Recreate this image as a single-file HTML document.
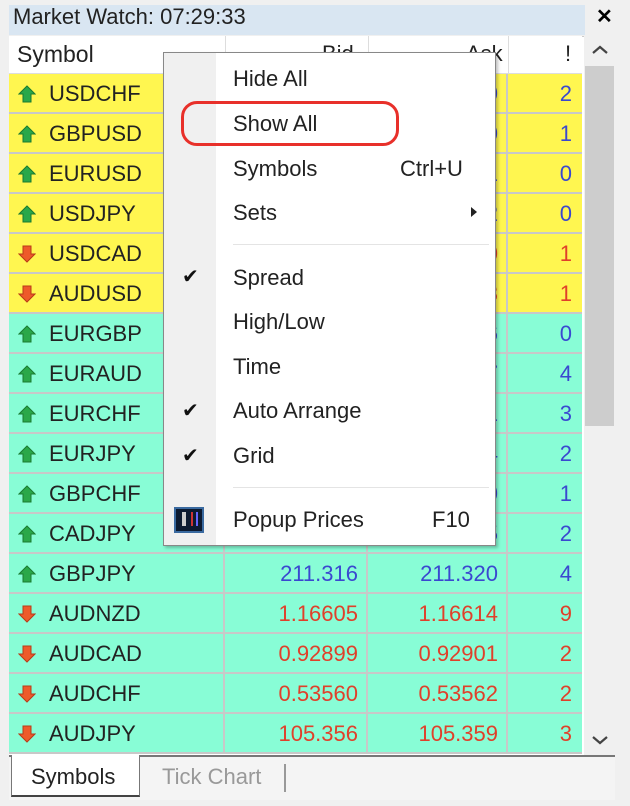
<!DOCTYPE html>
<html><head><meta charset="utf-8"><style>
*{margin:0;padding:0;box-sizing:border-box}
body{width:630px;height:806px;background:#f0f0f0;font-family:"Liberation Sans",sans-serif;position:relative;overflow:hidden}
.a{position:absolute}
.t{font-size:22px;line-height:40px;white-space:nowrap}
.row{position:absolute;left:9px;width:573px;height:40px;border-bottom:2px solid #c8c8c8}
.y{background:#fff650}.g{background:#88fdd6}
.c{position:absolute;top:0;height:38px;border-right:2px solid #c8c8c8}
.sym{left:0;width:216px;padding-left:40px;color:#222}
.bid{left:216px;width:143px;text-align:right;padding-right:8px}
.ask{left:359px;width:140px;text-align:right;padding-right:8px}
.sp{left:499px;width:74px;text-align:right;padding-right:10px;border-right:none}
.b{color:#3a48d0}.r{color:#e0402a}
.ic{position:absolute;left:9px;top:11px}
.mi{position:absolute;left:233px;font-size:22px;color:#222;line-height:30px}
.ck{position:absolute;left:182px;font-size:20px;color:#111}
</style></head><body>
<div class="a" style="left:9px;top:5px;width:576px;height:30px;background:#d9e6f2"></div>
<div class="a t" style="left:13px;top:-3px;color:#222;font-size:22px">Market Watch: 07:29:33</div>
<div class="a t" style="left:596px;top:-3px;font-size:20px;font-weight:bold">✕</div>
<div class="a" style="left:9px;top:36px;width:606px;height:720px;background:#fff;border-top:1px solid #ccc"></div>
<div class="a" style="left:9px;top:36px;width:573px;height:38px;background:#fff;border-bottom:1px solid #ddd"></div>
<div class="a t" style="left:17px;top:34px;color:#222;font-size:23px">Symbol</div>
<div class="a" style="left:225px;top:36px;width:1px;height:38px;background:#ddd"></div>
<div class="a" style="left:368px;top:36px;width:1px;height:38px;background:#ddd"></div>
<div class="a" style="left:508px;top:36px;width:1px;height:38px;background:#ddd"></div>
<div class="a t" style="left:322px;top:34px;color:#222">Bid</div>
<div class="a t" style="left:466px;top:34px;color:#222">Ask</div>
<div class="a t" style="left:565px;top:34px;color:#222">!</div>
<div class="a" style="left:584px;top:36px;width:31px;height:720px;background:#f0f0f0"></div>
<div class="a" style="left:585px;top:66px;width:29px;height:360px;background:#cdcdcd"></div>
<svg class="a" style="left:591px;top:44px" width="18" height="12"><path d="M2 9 L9 3 L16 9" stroke="#444" stroke-width="2.2" fill="none"/></svg>
<svg class="a" style="left:591px;top:734px" width="18" height="12"><path d="M2 3 L9 9 L16 3" stroke="#444" stroke-width="2.2" fill="none"/></svg>

<svg width="0" height="0" style="position:absolute"><defs>
<g id="up"><path d="M9 1 L17 9 L13 9 L13 17 L5 17 L5 9 L1 9 Z" fill="#2aa84a" stroke="#1a7a30" stroke-width="1"/></g>
<g id="dn"><path d="M9 17 L17 9 L13 9 L13 1 L5 1 L5 9 L1 9 Z" fill="#ee5a2a" stroke="#b83a18" stroke-width="1"/></g>
</defs></svg>

<div id="rows"></div>
<script>
var d=[["USDCHF","","0","2","y","u","b"],["GBPUSD","","0","1","y","u","b"],["EURUSD","","1","0","y","u","b"],["USDJPY","","2","0","y","u","b"],["USDCAD","","0","1","y","d","r"],["AUDUSD","","3","1","y","d","r"],["EURGBP","","6","0","g","u","b"],["EURAUD","","7","4","g","u","b"],["EURCHF","","1","3","g","u","b"],["EURJPY","","4","2","g","u","b"],["GBPCHF","","0","1","g","u","b"],["CADJPY","","5","2","g","u","b"],["GBPJPY","211.316","211.320","4","g","u","b"],["AUDNZD","1.16605","1.16614","9","g","d","r"],["AUDCAD","0.92899","0.92901","2","g","d","r"],["AUDCHF","0.53560","0.53562","2","g","d","r"],["AUDJPY","105.356","105.359","3","g","d","r"]];
var h="";d.forEach(function(r,i){var y=74+i*40;if(i==16)y=714;
h+='<div class="row '+r[4]+'" style="top:'+y+'px"><div class="c t sym"><svg class="ic" width="18" height="18"><use href="#'+(r[5]=="u"?"up":"dn")+'"/></svg>'+r[0]+'</div><div class="c t bid '+r[6]+'">'+r[1]+'</div><div class="c t ask '+r[6]+'">'+r[2]+'</div><div class="c t sp '+r[6]+'">'+r[3]+'</div></div>';});
document.getElementById("rows").innerHTML=h;
</script>
<div class="a" style="left:9px;top:755px;width:606px;height:45px;background:#f4f4f4;border-top:2px solid #777"></div>
<div class="a" style="left:11px;top:755px;width:129px;height:42px;background:#fff;border:1px solid #777;border-top:none;border-bottom:2px solid #444"></div>
<div class="a t" style="left:31px;top:757px;color:#222">Symbols</div>
<div class="a t" style="left:162px;top:757px;color:#999">Tick Chart</div>
<div class="a" style="left:284px;top:764px;width:2px;height:28px;background:#999"></div>

<div class="a" style="left:163px;top:52px;width:333px;height:494px;background:#fff;border:1px solid #888;box-shadow:2px 2px 3px rgba(0,0,0,.25)"></div>
<div class="a" style="left:164px;top:53px;width:52px;height:492px;background:#f0f0f0"></div>
<div class="mi" style="top:64px">Hide All</div>
<div class="mi" style="top:109px">Show All</div>
<div class="mi" style="top:154px">Symbols</div><div class="mi" style="top:154px;left:400px">Ctrl+U</div>
<div class="mi" style="top:198px">Sets</div>
<div class="a" style="left:471px;top:207px;width:0;height:0;border-left:6px solid #222;border-top:5px solid transparent;border-bottom:5px solid transparent"></div>
<div class="a" style="left:233px;top:244px;width:256px;height:1px;background:#e4e4e4"></div>
<div class="mi" style="top:263px">Spread</div>
<div class="mi" style="top:307px">High/Low</div>
<div class="mi" style="top:352px">Time</div>
<div class="mi" style="top:396px">Auto Arrange</div>
<div class="mi" style="top:441px">Grid</div>
<div class="a" style="left:233px;top:487px;width:256px;height:1px;background:#e4e4e4"></div>
<div class="mi" style="top:505px">Popup Prices</div><div class="mi" style="top:505px;left:432px">F10</div>
<div class="ck" style="top:264px">✔</div><div class="ck" style="top:398px">✔</div><div class="ck" style="top:443px">✔</div>
<div class="a" style="left:174px;top:507px;width:30px;height:26px;background:#0c1a30;border:2px solid #3a6aa0"></div>
<div class="a" style="left:182px;top:512px;width:4px;height:14px;background:#ccc"></div>
<div class="a" style="left:191px;top:512px;width:2px;height:14px;background:#c33"></div>
<div class="a" style="left:196px;top:512px;width:2px;height:14px;background:#66f"></div>
<div class="a" style="left:181px;top:101px;width:218px;height:45px;border:3px solid #e8302a;border-radius:16px"></div>
</body></html>
